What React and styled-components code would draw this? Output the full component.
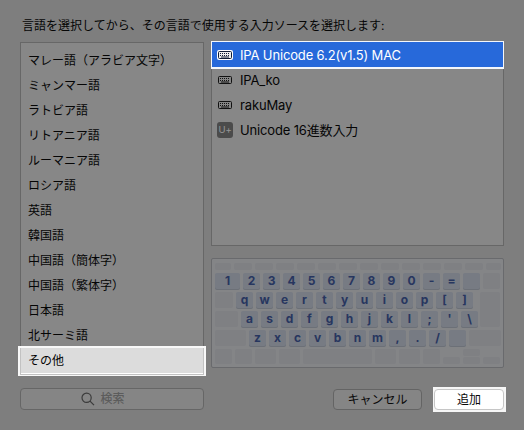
import React from "react";
import styled, { createGlobalStyle, css } from "styled-components";

const Global = createGlobalStyle`
  * { box-sizing: border-box; }
  body {
    margin: 0;
    background: #7e7e7e;
    color: #050505;
    font: 12px/25px Inter, "Noto Sans CJK JP", sans-serif;
  }
`;

const Dialog = styled.main`
  width: 524px;
  height: 430px;
  overflow: hidden;
  padding: 13px 18px 0 18px;
  background: #7e7e7e;
`;

const Prompt = styled.p`
  margin: 0 0 3px 4px;
  height: 25px;
  white-space: nowrap;
`;

const Columns = styled.div`
  display: flex;
  gap: 5px;
  height: 335px;
`;

const LanguageColumn = styled.div`
  display: flex;
  flex-direction: column;
  width: 188px;
  padding-top: 1px;
`;

const LanguageList = styled.ul`
  list-style: none;
  margin: 0 2px;
  padding: 5px 0 0 7px;
  height: 304px;
  border: 1px solid #676767;
  border-bottom: 0;
  background: #878787;
`;

const Language = styled.li`
  height: 25px;
  white-space: nowrap;
`;

const ChosenLanguage = styled.div`
  height: 30px;
  padding: 2px;
  background: #f8f8f8;
`;

const ChosenLabel = styled.div`
  height: 27px;
  padding-left: 7px;
  border: 1px solid #c2c2c2;
  border-top: 0;
  background: #dcdcdc;
  line-height: 25px;
  box-shadow: inset 0 -1px #fff;
`;

const SourceColumn = styled.div`
  display: flex;
  flex-direction: column;
  gap: 12px;
  width: 293px;
`;

const SourceList = styled.ul`
  list-style: none;
  margin: 0;
  padding: 0;
  height: 205px;
  border: 1px solid #676767;
  border-top: 0;
  background: #878787;
`;

const Source = styled.li`
  display: flex;
  align-items: center;
  gap: 7px;
  height: 25px;
  padding-left: 5px;
  font-size: 13px;
  letter-spacing: -0.15px;
  white-space: nowrap;
  ${(p) =>
    p.$selected &&
    css`
      height: 28px;
      margin: 0 -1px -1px;
      padding: 1px 0 0 5px;
      border: 1px solid #f4f7fb;
      border-bottom-width: 2px;
      background: #2769da;
      color: #fff;
    `}
`;

const SourceText = styled.span`
  line-height: 23px;
`;

const SourceIcon = styled.span`
  display: flex;
  align-items: center;
  justify-content: center;
  width: 16px;
  height: 16px;
  margin-top: -1px;
`;

const UnicodeBadge = styled(SourceIcon)`
  border-radius: 3px;
  background: #4b4b4b;
  color: #979797;
  font-size: 9.5px;
  line-height: 16px;
`;

const Keyboard = styled.div`
  display: flex;
  flex-direction: column;
  gap: 3px;
  height: 110px;
  padding: 4px 3px 3px;
  border: 1px solid #696a6d;
  border-radius: 2px;
  background: #848587;
`;

const KeyRow = styled.div`
  display: flex;
  gap: 3px;
  height: ${(p) => p.$h || 16}px;
  align-items: ${(p) => (p.$low ? "flex-end" : "stretch")};
`;

const MiddleRows = styled.div`
  display: flex;
  justify-content: space-between;
  height: 35px;
`;

const RowStack = styled.div`
  display: flex;
  flex-direction: column;
  gap: 3px;
`;

const Key = styled.span`
  flex: none;
  width: ${(p) => p.$w || 17}px;
  height: ${(p) => (p.$h ? `${p.$h}px` : "100%")};
  border-radius: 2px;
  background: #7f8083;
  color: #27365f;
  font: 700 12px/16px Inter, "Liberation Sans", sans-serif;
  text-align: center;
  ${(p) =>
    p.$active &&
    css`
      background: #777b83;
      box-shadow: 0 1px #6c7077;
    `}
`;

const ArrowPair = styled.span`
  display: flex;
  flex-direction: column;
  gap: 1px;
`;

const Footer = styled.footer`
  display: flex;
  align-items: flex-start;
  padding: 11px 0 0 2px;
`;

const SearchBox = styled.div`
  display: flex;
  align-items: center;
  justify-content: center;
  gap: 5px;
  width: 184px;
  height: 22px;
  margin: 1px 129px 0 0;
  padding-right: 18px;
  border: 1px solid #666;
  border-radius: 4px;
  background: #858585;
  color: #5c5c5c;
  font-weight: 500;
  line-height: 20px;
`;

const Button = styled.button`
  width: ${(p) => p.$w}px;
  height: 21px;
  padding: 0;
  border: 1px solid ${(p) => (p.$bright ? "#c6c6c6" : "#646464")};
  border-radius: 4px;
  background: ${(p) => (p.$bright ? "#fff" : "#858585")};
  color: #090909;
  font: inherit;
  line-height: 18px;
`;

const CancelSlot = styled.div`
  display: flex;
  padding: 2px 11px 0 0;
`;

const AddSpotlight = styled.div`
  display: flex;
  width: 73px;
  height: 25px;
  padding: 2px 1px;
  background: #f6f6f6;
`;

const languages = [
  "マレー語（アラビア文字）", "ミャンマー語", "ラトビア語", "リトアニア語",
  "ルーマニア語", "ロシア語", "英語", "韓国語", "中国語（簡体字）",
  "中国語（繁体字）", "日本語", "北サーミ語",
];

const letters = (text) => [...text].map((label) => ({ label, active: true }));
const pad = (w) => ({ w });
const blank = { active: true };

const functionRow = [16, 18, 18, 18, 18, 18, 18, 18, 18, 18, 18, 18, 18, 15].map(pad);
const numberRow = [{ label: "1", w: 25, active: true }, ...letters("234567890-="), blank, pad(17)];
const topLetters = [pad(18), ...letters("qwertyuiop[]")];
const homeLetters = [pad(23), ...letters("asdfghjkl;'\\")];
const lowLetters = [pad(31), ...letters("zxcvbnm,./"), blank, pad(32)];

function KeyboardIcon({ selected }) {
  const ink = selected ? "#101c35" : "#111";
  return (
    <svg width="16" height="10" viewBox="0 0 16 10">
      {selected && <rect width="16" height="10" rx="2" fill="#fff" />}
      <rect x="1.5" y="1.5" width="13" height="7" rx="1" fill={selected ? "#eee" : "#858585"} stroke={ink} />
      <path d="M3 3.5h10M3 5.5h10" stroke={ink} strokeDasharray="1 1" />
      <path d="M4 7h8" stroke={ink} />
    </svg>
  );
}

const renderKeys = (keys) =>
  keys.map((k, i) => (
    <Key key={i} $w={k.w} $active={k.active}>{k.label}</Key>
  ));

export default function App() {
  return (
    <>
      <Global />
      <Dialog>
        <Prompt>言語を選択してから、その言語で使用する入力ソースを選択します:</Prompt>
        <Columns>
          <LanguageColumn>
            <LanguageList>
              {languages.map((name) => <Language key={name}>{name}</Language>)}
            </LanguageList>
            <ChosenLanguage><ChosenLabel>その他</ChosenLabel></ChosenLanguage>
          </LanguageColumn>
          <SourceColumn>
            <SourceList>
              <Source $selected><SourceIcon><KeyboardIcon selected /></SourceIcon><SourceText>IPA Unicode 6.2(v1.5) MAC</SourceText></Source>
              <Source><SourceIcon><KeyboardIcon /></SourceIcon><SourceText>IPA_ko</SourceText></Source>
              <Source><SourceIcon><KeyboardIcon /></SourceIcon><SourceText>rakuMay</SourceText></Source>
              <Source><UnicodeBadge>U+</UnicodeBadge><SourceText>Unicode 16進数入力</SourceText></Source>
            </SourceList>
            <Keyboard>
              <KeyRow $h={7}>{renderKeys(functionRow)}</KeyRow>
              <KeyRow>{renderKeys(numberRow)}</KeyRow>
              <MiddleRows>
                <RowStack>
                  <KeyRow>{renderKeys(topLetters)}</KeyRow>
                  <KeyRow>{renderKeys(homeLetters)}</KeyRow>
                </RowStack>
                <Key $w={20} />
              </MiddleRows>
              <KeyRow>{renderKeys(lowLetters)}</KeyRow>
              <KeyRow $low>
                {renderKeys([17, 17, 21, 21, 69, 21, 21, 17].map(pad))}
                <Key $h={7} />
                <ArrowPair><Key $h={7} /><Key $h={7} /></ArrowPair>
                <Key $h={7} />
              </KeyRow>
            </Keyboard>
          </SourceColumn>
        </Columns>
        <Footer>
          <SearchBox>
            <svg width="14" height="14" viewBox="0 0 14 14" fill="none" stroke="#3b3b3b" strokeWidth="1.2">
              <circle cx="5.6" cy="5.8" r="4.6" />
              <path d="M9 9.2l4 4" />
            </svg>
            検索
          </SearchBox>
          <CancelSlot><Button $w={89}>キャンセル</Button></CancelSlot>
          <AddSpotlight><Button $w={70} $bright>追加</Button></AddSpotlight>
        </Footer>
      </Dialog>
    </>
  );
}
